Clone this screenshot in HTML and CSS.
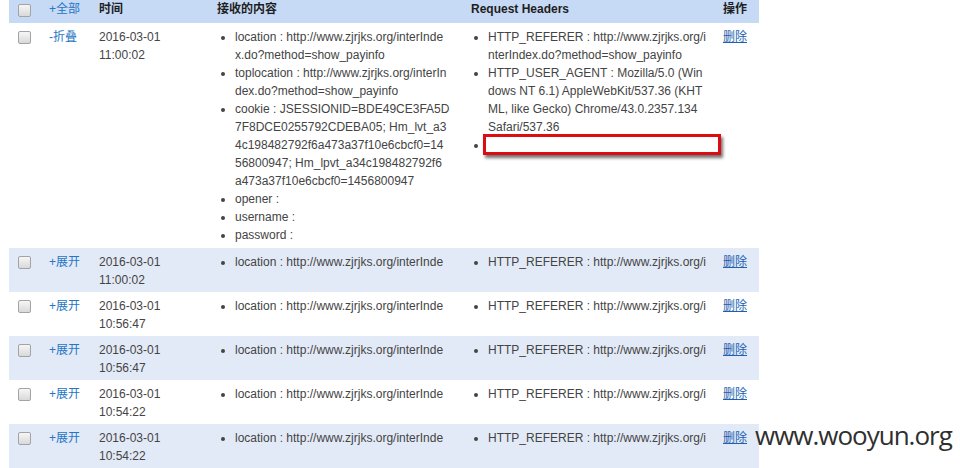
FILE: index.html
```html
<!DOCTYPE html>
<html lang="zh-CN">
<head>
<meta charset="utf-8">
<title>记录</title>
<link rel="stylesheet" href="styles.css">
</head>
<body>
<div class="page">
<table class="grid">
  <colgroup>
    <col class="c-chk"><col class="c-tog"><col class="c-time"><col class="c-body"><col class="c-head"><col class="c-op">
  </colgroup>
  <thead>
    <tr>
      <th><span class="chk"></span></th>
      <th class="plain"><a class="tog" href="#">+全部</a></th>
      <th>时间</th>
      <th>接收的内容</th>
      <th>Request Headers</th>
      <th>操作</th>
    </tr>
  </thead>
  <tbody>
    <tr class="open">
      <td><span class="chk"></span></td>
      <td><a class="tog" href="#">-折叠</a></td>
      <td>2016-03-01<br>11:00:02</td>
      <td><ul class="kv">
        <li>location : http://www.zjrjks.org/interInde<br>x.do?method=show_payinfo</li>
        <li>toplocation : http://www.zjrjks.org/interIn<br>dex.do?method=show_payinfo</li>
        <li>cookie : JSESSIONID=BDE49CE3FA5D<br>7F8DCE0255792CDEBA05; Hm_lvt_a3<br>4c198482792f6a473a37f10e6cbcf0=14<br>56800947; Hm_lpvt_a34c198482792f6<br>a473a37f10e6cbcf0=1456800947</li>
        <li>opener :</li>
        <li>username :</li>
        <li>password :</li>
      </ul></td>
      <td><ul class="kv hd">
        <li>HTTP_REFERER : http://www.zjrjks.org/i<br>nterIndex.do?method=show_payinfo</li>
        <li>HTTP_USER_AGENT : Mozilla/5.0 (Win<br>dows NT 6.1) AppleWebKit/537.36 (KHT<br>ML, like Gecko) Chrome/43.0.2357.134<br>Safari/537.36</li>
        <li><span class="mask"></span></li>
      </ul></td>
      <td><a class="del" href="#">删除</a></td>
    </tr>
    <tr class="alt">
      <td><span class="chk"></span></td>
      <td><a class="tog" href="#">+展开</a></td>
      <td>2016-03-01<br>11:00:02</td>
      <td><ul class="kv one"><li>location : http://www.zjrjks.org/interInde</li></ul></td>
      <td><ul class="kv hd one"><li>HTTP_REFERER : http://www.zjrjks.org/i</li></ul></td>
      <td><a class="del" href="#">删除</a></td>
    </tr>
    <tr>
      <td><span class="chk"></span></td>
      <td><a class="tog" href="#">+展开</a></td>
      <td>2016-03-01<br>10:56:47</td>
      <td><ul class="kv one"><li>location : http://www.zjrjks.org/interInde</li></ul></td>
      <td><ul class="kv hd one"><li>HTTP_REFERER : http://www.zjrjks.org/i</li></ul></td>
      <td><a class="del" href="#">删除</a></td>
    </tr>
    <tr class="alt">
      <td><span class="chk"></span></td>
      <td><a class="tog" href="#">+展开</a></td>
      <td>2016-03-01<br>10:56:47</td>
      <td><ul class="kv one"><li>location : http://www.zjrjks.org/interInde</li></ul></td>
      <td><ul class="kv hd one"><li>HTTP_REFERER : http://www.zjrjks.org/i</li></ul></td>
      <td><a class="del" href="#">删除</a></td>
    </tr>
    <tr>
      <td><span class="chk"></span></td>
      <td><a class="tog" href="#">+展开</a></td>
      <td>2016-03-01<br>10:54:22</td>
      <td><ul class="kv one"><li>location : http://www.zjrjks.org/interInde</li></ul></td>
      <td><ul class="kv hd one"><li>HTTP_REFERER : http://www.zjrjks.org/i</li></ul></td>
      <td><a class="del" href="#">删除</a></td>
    </tr>
    <tr class="alt">
      <td><span class="chk"></span></td>
      <td><a class="tog" href="#">+展开</a></td>
      <td>2016-03-01<br>10:54:22</td>
      <td><ul class="kv one"><li>location : http://www.zjrjks.org/interInde</li></ul></td>
      <td><ul class="kv hd one"><li>HTTP_REFERER : http://www.zjrjks.org/i</li></ul></td>
      <td><a class="del" href="#">删除</a></td>
    </tr>
  </tbody>
</table>
<div class="watermark">www.wooyun.org</div>
</div>
</body>
</html>
```
FILE: styles.css
```css
html, body {
  margin: 0;
  padding: 0;
  background: #ffffff;
}
.page {
  position: relative;
  width: 960px;
  height: 468px;
  overflow: hidden;
  padding-left: 9px;
  box-sizing: border-box;
  font-family: "Liberation Sans", Arial, "Noto Sans CJK SC", sans-serif;
  font-size: 12px;
  line-height: 18px;
  color: #444444;
}
.grid {
  width: 750px;
  table-layout: fixed;
  border-collapse: collapse;
  border-spacing: 0;
}
.c-chk { width: 32px; }
.c-tog { width: 50px; }
.c-time { width: 118px; }
.c-body { width: 254px; }
.c-head { width: 252px; }
.c-op { width: 44px; }
.grid th {
  background: #c6daf5;
  color: #1e1e1e;
  font-weight: bold;
  text-align: left;
  padding: 0 8px 5px;
  height: 18px;
  vertical-align: top;
}
.grid th.plain { font-weight: normal; }
.grid td {
  padding: 5px 8px 3px;
  vertical-align: top;
}
.grid tr.open td { padding-bottom: 4px; }
.grid tr.alt td { background: #e3eaf7; }
.chk {
  display: block;
  width: 11px;
  height: 11px;
  margin: 4px 0 0 1px;
  border: 1px solid #a3a3a3;
  border-radius: 2px;
  background: linear-gradient(#f6f6f6, #d9d9d9);
}
.grid td .chk { margin-top: 3px; }
.tog {
  color: #2676c4;
  text-decoration: none;
}
.del {
  color: #1d5fb0;
  text-decoration: underline;
}
.kv {
  margin: 0;
  padding-left: 18px;
  word-break: break-all;
  list-style: disc;
}
.kv.hd { padding-left: 17px; }
.kv.one { white-space: nowrap; overflow: hidden; }
.mask {
  display: inline-block;
  vertical-align: top;
  box-sizing: border-box;
  width: 238px;
  height: 21px;
  margin: -2px 0 0 -5px;
  border: 3px solid #dc0d12;
  background: #ffffff;
  box-shadow: 2px 3px 3px rgba(0, 0, 0, 0.55);
}
.watermark {
  position: absolute;
  left: 755px;
  top: 417px;
  font-family: "Open Sans", "DejaVu Sans", sans-serif;
  font-size: 26px;
  letter-spacing: -1px;
  line-height: 36px;
  color: #2f2f2f;
}
```
